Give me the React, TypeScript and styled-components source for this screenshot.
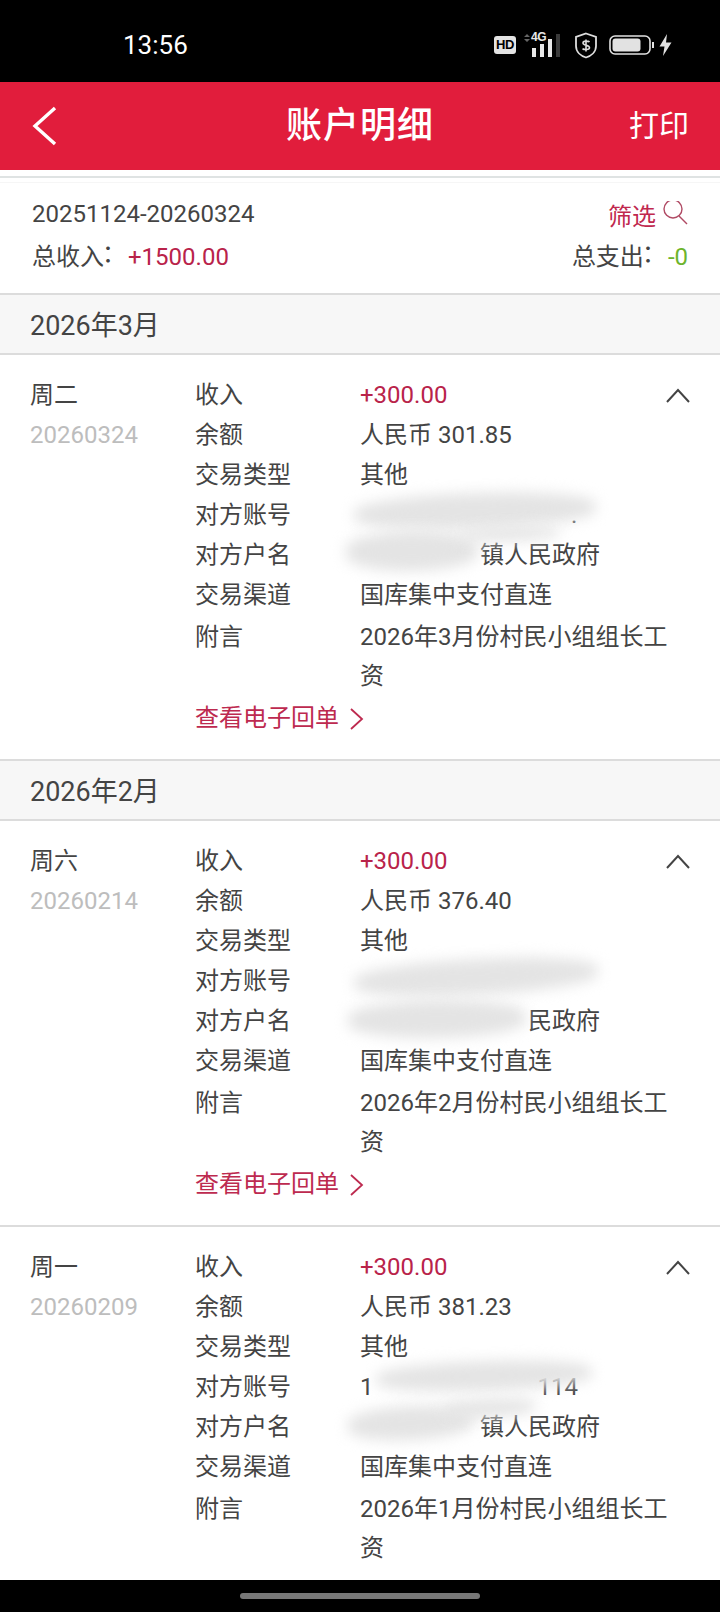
import { FC } from "react";
import styled, { createGlobalStyle } from "styled-components";

const GlobalStyle = createGlobalStyle`
  html, body {
    margin: 0;
    padding: 0;
    background: #fff;
  }
  body {
    font-family: Roboto, "Noto Sans CJK SC", sans-serif;
    color: #444;
  }
`;

const Page = styled.div`
  width: 720px;
  height: 1612px;
  display: flex;
  flex-direction: column;
  overflow: hidden;
  background: #fff;
`;

const StatusBar = styled.div`
  height: 82px;
  flex: none;
  background: #000;
  color: #fff;
  display: flex;
  align-items: center;
  justify-content: space-between;
  padding: 8px 48px 0 123px;
  box-sizing: border-box;
`;

const Clock = styled.span`
  font-size: 26px;
  font-weight: 400;
`;

const StatusIcons = styled.div`
  display: flex;
  align-items: center;
`;

const HdBadge = styled.span`
  width: 22px;
  height: 18px;
  border-radius: 3px;
  background: #e4e4e4;
  color: #000;
  font: 700 13px/18px "Liberation Sans", sans-serif;
  letter-spacing: -0.5px;
  text-align: center;
  margin-right: 8px;
`;

const Signal = styled.div`
  position: relative;
  width: 38px;
  height: 24px;
  margin-right: 12px;
`;

const SignalLabel = styled.span`
  position: absolute;
  left: 7px;
  top: -2px;
  font: 700 12px/12px "Liberation Sans", sans-serif;
  letter-spacing: -0.5px;
  color: #e8e8e8;
`;

const Header = styled.header`
  height: 88px;
  flex: none;
  background: #e11d3c;
  color: #fff;
  display: grid;
  grid-template-columns: 120px 1fr 120px;
  align-items: center;
  padding: 0 31px;
  box-sizing: border-box;
`;

const Title = styled.h1`
  margin: 0;
  font-size: 36px;
  font-weight: 500;
  line-height: 1;
  text-align: center;
  letter-spacing: 1px;
`;

const PrintButton = styled.span`
  font-size: 30px;
  line-height: 1;
  text-align: right;
`;

const TopRule = styled.div`
  flex: none;
  margin-top: 6px;
  height: 2px;
  background: #dfe3e3;
`;

const Summary = styled.section`
  flex: none;
  height: 111px;
  margin-top: 4px;
  border-top: 1px solid #f6f6f6;
  padding: 11px 32px 0 32px;
  box-sizing: border-box;
  display: flex;
  flex-direction: column;
`;

const SummaryRow = styled.div`
  height: 40px;
  display: flex;
  align-items: center;
  justify-content: space-between;
  font-size: 24px;
`;

const Colon = styled.span`
  display: inline-block;
  font-family: "Noto Sans CJK SC", sans-serif;
  transform: translate(-2px, -3px);
`;

const Filter = styled.span`
  display: flex;
  align-items: center;
  gap: 6px;
  color: #c0284e;
`;

const Money = styled.span<{ $tone: "in" | "out" }>`
  color: ${(p) => (p.$tone === "in" ? "#b9234a" : "#6db42c")};
`;

const MonthBand = styled.div`
  flex: none;
  height: 62px;
  box-sizing: border-box;
  border-top: 2px solid #dcdcdc;
  border-bottom: 2px solid #dcdcdc;
  background: #f7f7f7;
  padding: 0 0 2px 30px;
  display: flex;
  align-items: center;
  font-size: 27px;
  color: #444;
`;

const List = styled.div`
  flex: 1;
  min-height: 0;
  overflow: hidden;
`;

const Entry = styled.article<{ $ruled?: boolean }>`
  display: grid;
  grid-template-columns: 165px 165px 1fr 40px;
  padding: 20px 30px 21px 30px;
  border-bottom: ${(p) => (p.$ruled ? "2px solid #dcdcdc" : "none")};
  font-size: 24px;
  line-height: 40px;
`;

const DayColumn = styled.div`
  display: flex;
  flex-direction: column;
`;

const Day = styled.span`
  color: #444;
`;

const DateText = styled.span`
  color: #bdbdbd;
`;

const Fields = styled.dl`
  grid-column: 2 / 4;
  margin: 0;
`;

const Field = styled.div<{ $wide?: boolean }>`
  display: grid;
  grid-template-columns: 165px 318px;
  margin-top: ${(p) => (p.$wide ? "3px" : "0")};
  line-height: ${(p) => (p.$wide ? "39px" : "40px")};
`;

const Label = styled.dt`
  color: #444;
`;

const Value = styled.dd<{ $income?: boolean }>`
  margin: 0;
  position: relative;
  color: ${(p) => (p.$income ? "#b9234a" : "#444")};
`;

const MaskedGap = styled.span<{ $chars: number }>`
  display: inline-block;
  width: ${(p) => p.$chars}em;
`;

const DigitGap = styled.span<{ $width: number }>`
  display: inline-block;
  width: ${(p) => p.$width}px;
`;

const Smudge = styled.div<{
  $left: number;
  $top: number;
  $width: number;
  $height: number;
  $tilt: number;
}>`
  position: absolute;
  left: ${(p) => p.$left}px;
  top: ${(p) => p.$top}px;
  width: ${(p) => p.$width}px;
  height: ${(p) => p.$height}px;
  transform: rotate(${(p) => p.$tilt}deg);
  border-radius: 50% / 40%;
  background: #e4e4e4;
  filter: blur(7px);
  z-index: 1;
`;

const ReceiptLink = styled.a`
  display: flex;
  align-items: center;
  gap: 10px;
  margin-top: 3px;
  color: #bd2a4f;
  line-height: 39px;
`;

const Chevron = styled.div`
  display: flex;
  justify-content: flex-end;
  padding-top: 13px;
`;

const BottomBar = styled.div`
  flex: none;
  height: 32px;
  background: #000;
  display: flex;
  justify-content: center;
  align-items: center;
`;

const HomePill = styled.div`
  width: 240px;
  height: 6px;
  border-radius: 3px;
  background: #777;
`;

type SmudgeSpec = { left: number; top: number; width: number; height: number; tilt: number };

interface EntryData {
  day: string;
  date: string;
  balance: string;
  accountHead?: string;
  accountGap: number;
  accountTail: string;
  account: SmudgeSpec[];
  nameGap: number;
  nameText: string;
  name: SmudgeSpec[];
  note: string;
  link: boolean;
}

const entries: Record<string, EntryData> = {
  march: {
    day: "周二",
    date: "20260324",
    balance: "人民币 301.85",
    accountGap: 211,
    accountTail: ".",
    account: [{ left: -6, top: -2, width: 242, height: 36, tilt: -2 }],
    nameGap: 5,
    nameText: "镇人民政府",
    name: [
      { left: -14, top: -4, width: 132, height: 40, tilt: -1 },
      { left: 100, top: -8, width: 100, height: 14, tilt: -2 },
    ],
    note: "2026年3月份村民小组组长工资",
    link: true,
  },
  february: {
    day: "周六",
    date: "20260214",
    balance: "人民币 376.40",
    accountGap: 0,
    accountTail: "",
    account: [{ left: -6, top: -2, width: 244, height: 36, tilt: -3 }],
    nameGap: 7,
    nameText: "民政府",
    name: [{ left: -12, top: -1, width: 178, height: 38, tilt: -1 }],
    note: "2026年2月份村民小组组长工资",
    link: true,
  },
  january: {
    day: "周一",
    date: "20260209",
    balance: "人民币 381.23",
    accountHead: "1",
    accountGap: 164,
    accountTail: "114",
    account: [{ left: 16, top: -6, width: 216, height: 30, tilt: -2 }],
    nameGap: 5,
    nameText: "镇人民政府",
    name: [
      { left: -12, top: -1, width: 126, height: 34, tilt: -3 },
      { left: 84, top: -8, width: 92, height: 18, tilt: -3 },
    ],
    note: "2026年1月份村民小组组长工资",
    link: false,
  },
};

const EntryBlock: FC<{ data: EntryData; ruled?: boolean }> = ({ data, ruled }) => (
  <Entry $ruled={ruled}>
    <DayColumn>
      <Day>{data.day}</Day>
      <DateText>{data.date}</DateText>
    </DayColumn>
    <Fields>
      <Field>
        <Label>收入</Label>
        <Value $income>+300.00</Value>
      </Field>
      <Field>
        <Label>余额</Label>
        <Value>{data.balance}</Value>
      </Field>
      <Field>
        <Label>交易类型</Label>
        <Value>其他</Value>
      </Field>
      <Field>
        <Label>对方账号</Label>
        <Value>
          {data.accountHead}
          <DigitGap $width={data.accountGap} />
          {data.accountTail}
          {data.account.map((s, i) => (
            <Smudge key={i} $left={s.left} $top={s.top} $width={s.width} $height={s.height} $tilt={s.tilt} />
          ))}
        </Value>
      </Field>
      <Field>
        <Label>对方户名</Label>
        <Value>
          <MaskedGap $chars={data.nameGap} />
          {data.nameText}
          {data.name.map((s, i) => (
            <Smudge key={i} $left={s.left} $top={s.top} $width={s.width} $height={s.height} $tilt={s.tilt} />
          ))}
        </Value>
      </Field>
      <Field>
        <Label>交易渠道</Label>
        <Value>国库集中支付直连</Value>
      </Field>
      <Field $wide>
        <Label>附言</Label>
        <Value>{data.note}</Value>
      </Field>
      {data.link && (
        <ReceiptLink>
          查看电子回单
          <svg width="16" height="24" viewBox="0 0 16 24" fill="none" stroke="#bd2a4f" strokeWidth="1.8">
            <path d="M2 2 L13 12 L2 22" />
          </svg>
        </ReceiptLink>
      )}
    </Fields>
    <Chevron>
      <svg width="24" height="15" viewBox="0 0 24 15" fill="none" stroke="#444" strokeWidth="2">
        <path d="M1 14 L12 2 L23 14" />
      </svg>
    </Chevron>
  </Entry>
);

const App: FC = () => (
  <>
    <GlobalStyle />
    <Page>
      <StatusBar>
        <Clock>13:56</Clock>
        <StatusIcons>
          <HdBadge>HD</HdBadge>
          <Signal>
            <SignalLabel>4G</SignalLabel>
            <svg width="38" height="24" viewBox="0 0 38 24" fill="#e8e8e8">
              <path d="M0 4 L3 1 L6 4 Z M0 6 L6 6 L3 9 Z" fill="#666" />
              <rect x="8" y="15" width="4" height="9" />
              <rect x="16" y="11" width="4" height="13" />
              <rect x="24" y="6" width="4" height="18" />
              <rect x="32" y="1" width="4" height="23" fill="#3a3a3a" />
            </svg>
          </Signal>
          <svg width="24" height="27" viewBox="0 0 24 27" fill="none" stroke="#dedede" strokeWidth="1.8">
            <path d="M12 1.5 L22 5 V14 C22 20 17 24 12 25.5 C7 24 2 20 2 14 V5 Z" />
            <path
              d="M15.5 10 C14.5 8.8 9 8.5 9 11 C9 14 15.5 12.5 15.5 15.8 C15.5 18 10 18 8.5 16.6 M12 7.5 V19.5"
              strokeWidth="1.6"
            />
          </svg>
          <svg
            width="46"
            height="22"
            viewBox="0 0 46 22"
            fill="none"
            stroke="#e2e2e2"
            strokeWidth="1.6"
            style={{ marginLeft: 11 }}
          >
            <rect x="1" y="2" width="40" height="18" rx="5" />
            <rect x="3.5" y="4.5" width="28" height="13" rx="3" fill="#e2e2e2" stroke="none" />
            <rect x="43" y="8" width="2" height="6" fill="#e2e2e2" stroke="none" />
          </svg>
          <svg width="13" height="24" viewBox="0 0 13 24" fill="#e2e2e2" style={{ marginLeft: 4 }}>
            <path d="M8 1 L0.5 13.5 H5.5 L4 23 L12.5 9.5 H7 Z" />
          </svg>
        </StatusIcons>
      </StatusBar>

      <Header>
        <svg width="28" height="40" viewBox="0 0 28 40" fill="none" stroke="#fff" strokeWidth="3.4">
          <path d="M24 2 L4 20 L24 38" />
        </svg>
        <Title>账户明细</Title>
        <PrintButton>打印</PrintButton>
      </Header>

      <TopRule />

      <Summary>
        <SummaryRow>
          <span>20251124-20260324</span>
          <Filter>
            筛选
            <svg width="26" height="26" viewBox="0 0 26 26" fill="none" stroke="#b04a64" strokeWidth="1.4">
              <circle cx="11" cy="8" r="9" />
              <path d="M17 15 L25 23" />
            </svg>
          </Filter>
        </SummaryRow>
        <SummaryRow>
          <span>
            总收入<Colon>：</Colon>
            <Money $tone="in">+1500.00</Money>
          </span>
          <span>
            总支出<Colon>：</Colon>
            <Money $tone="out">-0</Money>
          </span>
        </SummaryRow>
      </Summary>

      <List>
        <MonthBand>2026年3月</MonthBand>
        <EntryBlock data={entries.march} />
        <MonthBand>2026年2月</MonthBand>
        <EntryBlock data={entries.february} ruled />
        <EntryBlock data={entries.january} />
      </List>

      <BottomBar>
        <HomePill />
      </BottomBar>
    </Page>
  </>
);

export default App;
